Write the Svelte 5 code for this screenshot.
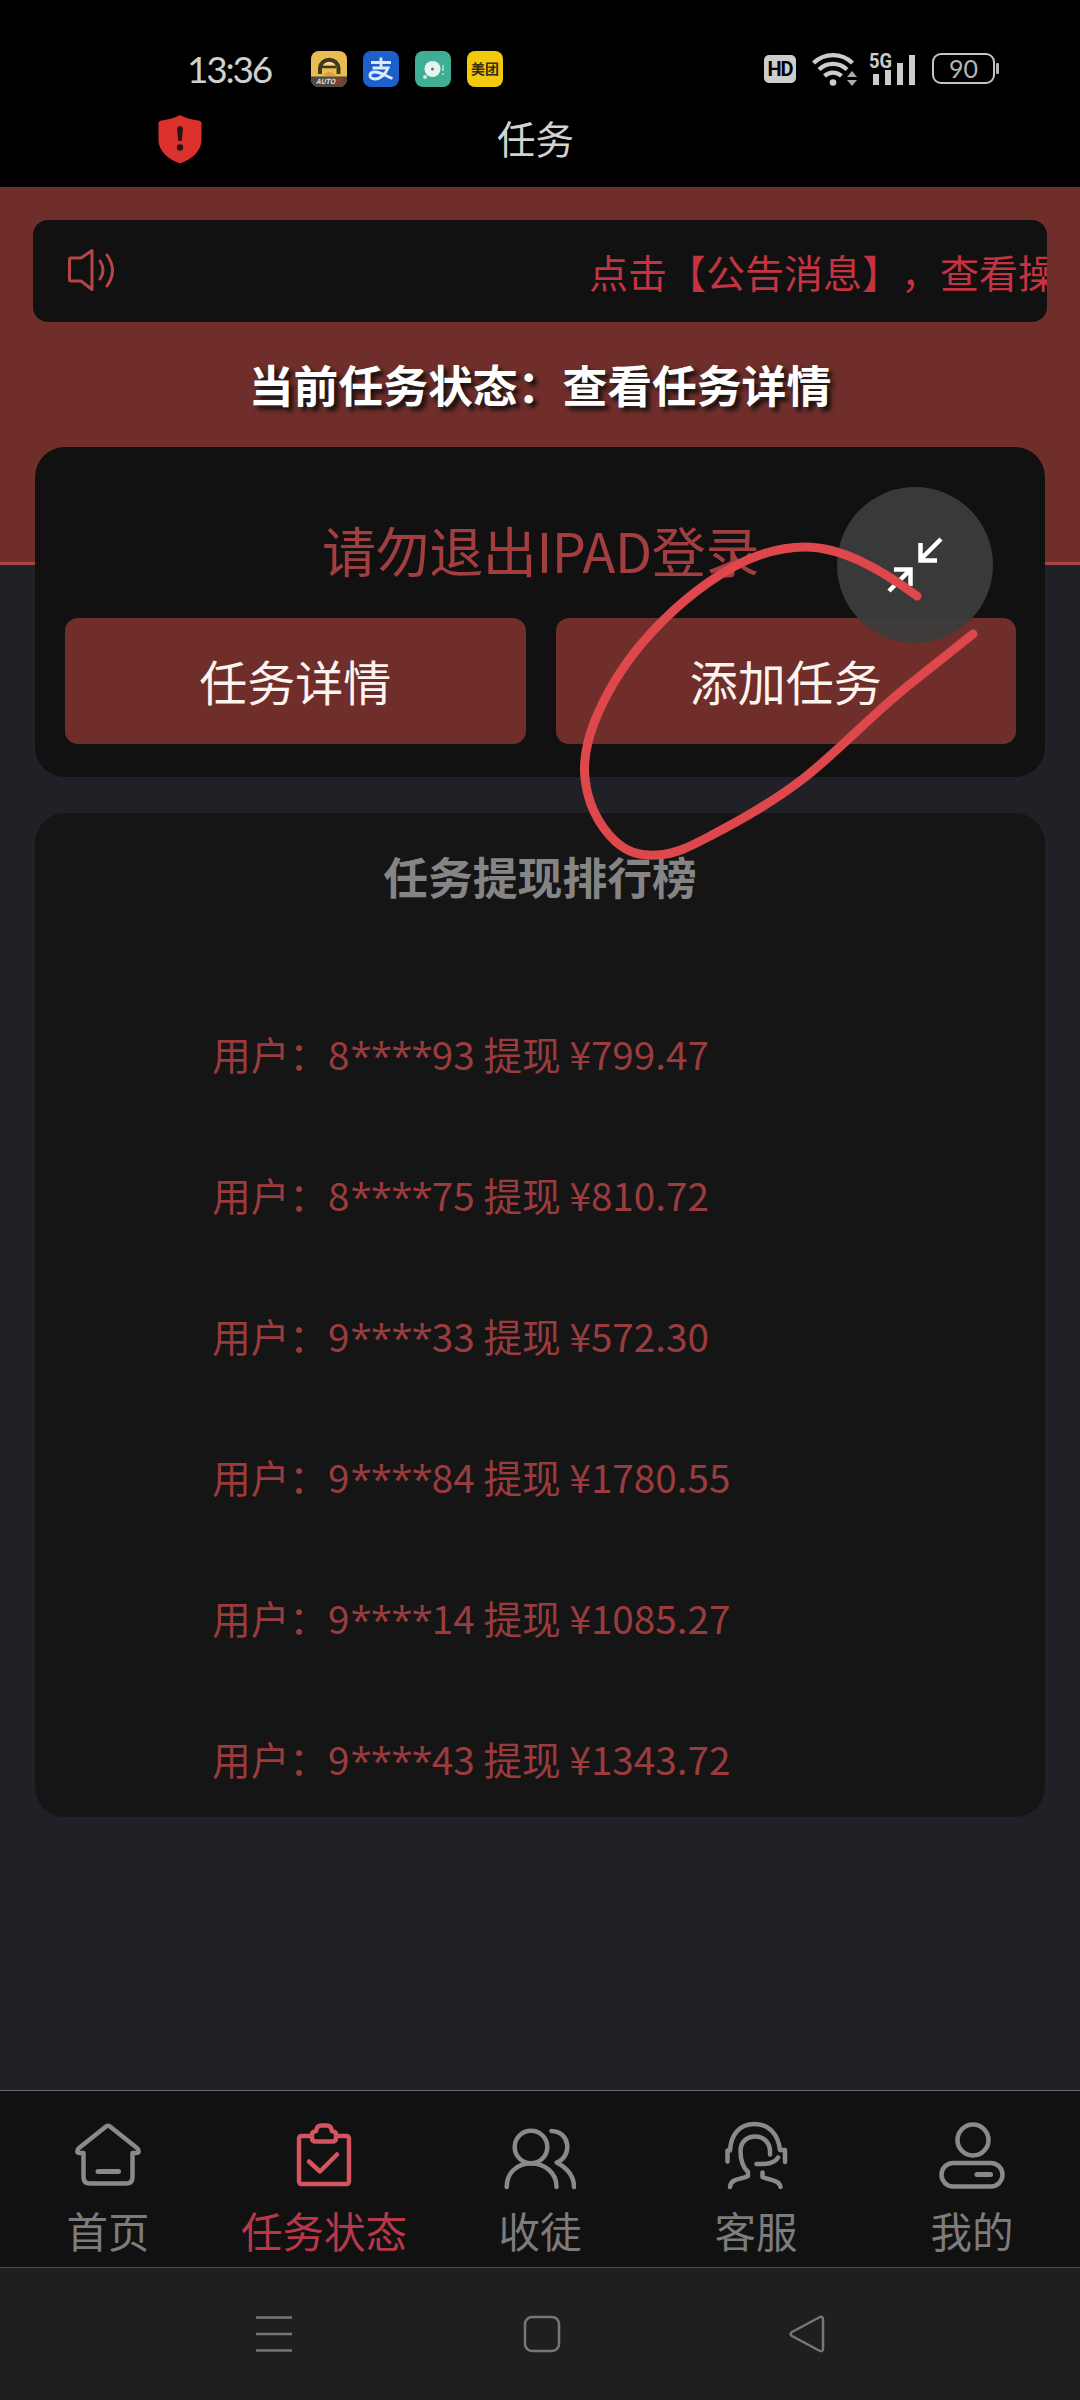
<script lang="ts">
	const ranking = [
		{ head: '8', tail: '93', amount: '¥799.47' },
		{ head: '8', tail: '75', amount: '¥810.72' },
		{ head: '9', tail: '33', amount: '¥572.30' },
		{ head: '9', tail: '84', amount: '¥1780.55' },
		{ head: '9', tail: '14', amount: '¥1085.27' },
		{ head: '9', tail: '43', amount: '¥1343.72' }
	];

	const tabs = [
		{ id: 'home', label: '首页' },
		{ id: 'task', label: '任务状态' },
		{ id: 'invite', label: '收徒' },
		{ id: 'service', label: '客服' },
		{ id: 'mine', label: '我的' }
	];

	let active = $state('task');
</script>

<div class="phone">
	<header class="top">
		<div class="status">
			<span class="status__time">13:36</span>
			<div class="status__apps">
				<svg width="36" height="36" viewBox="0 0 36 36">
					<defs><clipPath id="app-clip"><rect width="36" height="36" rx="8" /></clipPath></defs>
					<g clip-path="url(#app-clip)">
						<rect width="36" height="36" fill="#e9bd52" />
						<path d="M9 23v-6a9.300 9.300 0 0 1 18.500 0v6" fill="none" stroke="#40381c" stroke-width="4" />
						<path d="M12.500 13.500q5.800-5 11.600 0z" fill="#f3dfa0" />
						<path d="M11 16h14" stroke="#40381c" stroke-width="2.500" />
						<path d="M12 25q6-8 12.500 0z" fill="#e59a45" />
						<rect y="25.500" width="36" height="11" fill="#4a4a4c" />
						<rect x="20" y="27" width="12" height="7" fill="#7a4335" />
					</g>
					<text x="5" y="33" font-size="7" font-weight="700" font-style="italic" fill="#ddd">AUTO</text>
				</svg>
				<svg width="36" height="36" viewBox="0 0 36 36">
					<rect width="36" height="36" rx="8" fill="#1d5fcb" />
					<path
						d="M8 11.500h20M18 6.500v10M9.500 17h15.500c-2 5-7 11-13 11-7 0-6.500-7 0-7 6 0 11 4 17.500 6.500"
						fill="none"
						stroke="#dfeaf8"
						stroke-width="2.800"
					/>
				</svg>
				<svg width="36" height="36" viewBox="0 0 36 36">
					<rect width="36" height="36" rx="8" fill="#3fae94" />
					<circle cx="17.500" cy="18" r="8" fill="#e8f4ef" />
					<circle cx="17.500" cy="18" r="1.500" fill="#557a70" />
					<circle cx="10" cy="26" r="2" fill="#cfe9e0" />
					<path d="M28 14v6M28 22v2" stroke="#9edac9" stroke-width="1.800" />
				</svg>
				<span class="meituan">美团</span>
			</div>
			<div class="status__signals">
				<span class="hd">HD</span>
				<svg class="wifi" width="46" height="36" viewBox="0 0 46 36">
					<g fill="none" stroke="#ccc" stroke-width="4.200">
						<path d="M1.500 12a28 28 0 0 1 39 0" />
						<path d="M7 18.500a20 20 0 0 1 28 0" />
						<path d="M12.500 25a12.500 12.500 0 0 1 17 0" />
					</g>
					<circle cx="21" cy="31.500" r="3.300" fill="#ccc" />
					<path d="M35 26l5-6 5 6zM35 29h10l-5 6z" fill="#aaa" />
				</svg>
				<svg class="cell" width="48" height="36" viewBox="0 0 48 36">
					<text x="-1" y="17" font-size="20" font-weight="700" fill="#ccc" textLength="23" lengthAdjust="spacingAndGlyphs">5G</text>
					<path d="M3 23h6v11H3zM15 19h6v15h-6zM27 12h6v22h-6zM39 4h6v30h-6z" fill="#ccc" />
				</svg>
				<span class="battery">90</span>
			</div>
		</div>
		<div class="titlebar">
			<svg class="shield" width="44" height="50" viewBox="0 0 44 50">
				<path
					d="M22 1c5 3 13 5 18.500 5.500 2 .3 3 1.300 3 3.500v16c0 11-10 19.500-21.500 23.500C10.500 45.500.5 37 .5 26V10c0-2.200 1-3.200 3-3.500C9 6 17 4 22 1z"
					fill="#dc312c"
				/>
				<path d="M19 14q3-4 6 0l-1.300 13h-3.400z" fill="#2c1414" />
				<circle cx="22" cy="33.500" r="3.200" fill="#2c1414" />
			</svg>
			<h1>任务</h1>
		</div>
	</header>

	<main class="page">
		<section class="hero">
			<div class="notice">
				<svg width="50" height="44" viewBox="0 0 50 44">
					<g fill="none" stroke="#b64548" stroke-width="3" stroke-linejoin="round" stroke-linecap="round">
						<path d="M4 10h10L25 2.500v39L14 33H4q-1.500 0-1.500-1.500v-20Q2.500 10 4 10z" />
						<path d="M33 13q6 9 0 18" />
						<path d="M40 7q11 15.500 0 31" />
					</g>
				</svg>
				<div class="notice__track">点击【公告消息】，查看操</div>
			</div>
			<h2 class="state">当前任务状态：查看任务详情</h2>
		</section>

		<section class="card card--actions">
			<p class="warning">请勿退出IPAD登录</p>
			<div class="actions">
				<button type="button">任务详情</button>
				<button type="button">添加任务</button>
			</div>
		</section>

		<section class="card card--rank">
			<h3>任务提现排行榜</h3>
			<ul>
				{#each ranking as row}
					<li>用户：{row.head}<span class="stars">****</span>{row.tail} 提现 {row.amount}</li>
				{/each}
			</ul>
		</section>

		<div class="float">
			<svg width="56" height="56" viewBox="0 0 56 56" fill="none" stroke="#fff" stroke-width="4.500">
				<path d="M54 2L33 23M33.500 6v17.500H50" />
				<path d="M2 54l21-21M7 32.500h16.500V49" />
			</svg>
		</div>
		<!-- hand-drawn loop around the add button -->
		<svg class="mark" width="410" height="330" viewBox="0 0 410 330">
			<path
				d="M338 58C300 30 262 9 226 9C200 9 178 16 154 29C122 47 90 74 64 104C42 130 26 157 15 185C7 206 4 222 6 240C8 262 18 286 36 303C48 314 60 318 78 317C98 316 114 307 133 297C166 280 198 261 225 240C248 222 268 202 290 182C306 167 322 153 340 139L394 96"
				fill="none"
				stroke="#de474b"
				stroke-width="9"
				stroke-linecap="round"
				stroke-linejoin="round"
			/>
		</svg>
	</main>

	<nav class="tabs">
		{#each tabs as tab}
			<button type="button" class:active={active === tab.id} onclick={() => (active = tab.id)}>
				<svg width="72" height="72" viewBox="0 0 72 72">
					{#if tab.id === 'home'}
						<path d="M7 29L34 7.500q2-1.500 4 0L65 29q4 4.500-1 5h-3.500v24q0 6.500-6.500 6.500H18q-6.500 0-6.500-6.500V34H8q-5-.5-1-5z" />
						<path d="M26 52.500h20.500" stroke-width="5" />
					{:else if tab.id === 'task'}
						<path d="M23 17H14q-3 0-3 3v42q0 3 3 3h44q3 0 3-3V20q0-3-3-3H49" />
						<path d="M24 15q0-2 4-3 1-5.500 5-5.500h6q4 0 5 5.500 4 1 4 3v4q0 3.500-4 3.500H28q-4 0-4-3.500z" />
						<path d="M21 42.500l11 10 17-17" />
					{:else if tab.id === 'invite'}
						<circle cx="27" cy="28" r="16.300" />
						<path d="M2.700 68c0-14 10-23.500 24.300-23.500s25.500 9.500 25.500 23.500" />
						<path d="M47.500 12C66 12.500 69 37 52.700 43.500 63 49 70 56 70 68" />
					{:else if tab.id === 'service'}
						<path d="M7.500 42.500V31.500H10C11 15 20 5 34.500 5S58 15 60 31h5v12" />
						<path d="M50 35.500v-3C50 12.500 20.500 12.500 20.500 32c0 9 2 16 7.500 21v4c-8 4-17 2-18 11" />
						<path d="M36.500 45c9 0 18 0 21.500-6.500M42.500 53.500v4.500c7 3 17 3 18 10" />
					{:else}
						<circle cx="37" cy="21" r="15.500" />
						<rect x="5.500" y="44" width="61" height="23.500" rx="11.700" />
						<path d="M41 55.500h13.500" stroke-width="5" />
					{/if}
				</svg>
				<span>{tab.label}</span>
			</button>
		{/each}
	</nav>

	<footer class="sysnav">
		<svg width="40" height="40" viewBox="0 0 40 40"><path d="M2 3.500h36M2 20h36M2 36.500h36" /></svg>
		<svg width="40" height="40" viewBox="0 0 40 40"><rect x="4" y="3" width="34" height="34" rx="7" /></svg>
		<svg width="40" height="40" viewBox="0 0 40 40">
			<path d="M4 18L31 3.500q4-2 4 2v29q0 4-4 2L4 22q-3-2 0-4z" />
		</svg>
	</footer>
</div>

<style>
	:global(body) {
		margin: 0;
		background: #202126;
	}

	.phone {
		display: flex;
		flex-direction: column;
		width: 1080px;
		height: 2400px;
		overflow: hidden;
		background: #202126;
		font-family: 'Noto Sans CJK SC', sans-serif;
		font-weight: 400;
		text-spacing-trim: space-all;
	}

	h1,
	h2,
	h3,
	p,
	ul {
		margin: 0;
		padding: 0;
		font-weight: inherit;
	}

	button {
		padding: 0;
		border: 0;
		font: inherit;
	}

	.top {
		flex: none;
		height: 187px;
		background: #000;
	}

	.status {
		display: flex;
		align-items: center;
		height: 103px;
		padding: 34px 85px 0 187px;
		box-sizing: border-box;
	}

	.status__time {
		width: 124px;
		color: #d0d0d0;
		font-family: Lato, sans-serif;
		font-size: 37px;
		line-height: 40px;
		letter-spacing: -2.200px;
	}

	.status__apps {
		display: flex;
		gap: 16px;
	}

	.meituan {
		width: 36px;
		height: 36px;
		border-radius: 8px;
		background: #f2c90c;
		color: #3b2c12;
		font-size: 14px;
		font-weight: 700;
		line-height: 35px;
		text-align: center;
	}

	.status__signals {
		display: flex;
		align-items: center;
		margin-left: auto;
	}

	.hd {
		width: 32px;
		height: 28px;
		margin-right: 16px;
		border-radius: 5px;
		background: #ccc;
		color: #000;
		font-family: Roboto, sans-serif;
		font-size: 20px;
		font-weight: 700;
		line-height: 28px;
		text-align: center;
		letter-spacing: -1px;
	}

	.wifi {
		margin-right: 12px;
	}

	.cell {
		margin-right: 14px;
		overflow: visible;
		font-family: Roboto, sans-serif;
	}

	.battery {
		position: relative;
		width: 59px;
		height: 27px;
		border: 2px solid #c4c4c4;
		border-radius: 9px;
		color: #b5b5b5;
		font-family: Lato, sans-serif;
		font-size: 25px;
		line-height: 27px;
		text-align: center;
	}

	.battery::after {
		content: '';
		position: absolute;
		top: 8px;
		right: -6px;
		width: 3px;
		height: 11px;
		border-radius: 1px;
		background: #b5b5b5;
	}

	.titlebar {
		display: grid;
		grid-template-columns: 158px 1fr 158px;
		align-items: center;
		height: 72px;
	}

	.shield {
		grid-column: 1;
		margin-left: 158px;
	}

	h1 {
		grid-column: 2;
		margin-top: -4px;
		padding-right: 9px;
		color: #d2d2d2;
		font-size: 38.500px;
		line-height: 56px;
		text-align: center;
	}

	.page {
		position: relative;
		flex: 1;
	}

	.hero {
		height: 378px;
		padding: 33px 33px 0;
		box-sizing: border-box;
		border-bottom: 3px solid #a84642;
		background: #702e2a;
	}

	.notice {
		display: flex;
		align-items: center;
		height: 102px;
		padding-left: 34px;
		border-radius: 15px;
		background: #111;
		overflow: hidden;
		box-sizing: border-box;
	}

	.notice svg {
		flex: none;
		margin-top: -3px;
	}

	.notice__track {
		flex: none;
		margin-top: -1px;
		margin-left: 472px;
		color: #c43340;
		font-size: 39px;
		white-space: nowrap;
	}

	.state {
		margin-top: 30px;
		color: #fff;
		font-size: 44.800px;
		font-weight: 700;
		line-height: 64px;
		text-align: center;
		text-shadow: 4px 4px 4px #111;
	}

	.card {
		margin: 0 35px;
		border-radius: 30px;
		background: #111;
		box-sizing: border-box;
	}

	.card--actions {
		position: relative;
		height: 330px;
		margin-top: -118px;
		padding: 64px 29px 0 30px;
	}

	.warning {
		color: #a33e40;
		font-size: 54px;
		line-height: 78px;
		text-align: center;
		letter-spacing: -0.400px;
	}

	.actions {
		display: grid;
		grid-template-columns: 1fr 1fr;
		gap: 30px;
		margin-top: 29px;
	}

	.actions button {
		height: 126px;
		padding-bottom: 3px;
		border-radius: 13px;
		background: #702e2a;
		color: #fdf3ef;
		font-size: 48px;
	}

	.card--rank {
		height: 1004px;
		margin-top: 36px;
		padding-top: 31px;
		background: #151515;
	}

	.card--rank h3 {
		color: #858585;
		font-size: 44.800px;
		font-weight: 700;
		line-height: 64px;
		text-align: center;
	}

	.card--rank ul {
		margin-top: 75px;
		padding-left: 177px;
		list-style: none;
	}

	.card--rank li {
		height: 141px;
		color: #9a3c3e;
		font-size: 38.700px;
		line-height: 141px;
		white-space: nowrap;
	}

	.stars {
		margin-left: 1px;
		font-family: 'Open Sans', sans-serif;
		font-weight: 400;
		line-height: 1;
		letter-spacing: -1px;
	}

	.float {
		position: absolute;
		top: 300px;
		left: 837px;
		display: flex;
		align-items: center;
		justify-content: center;
		width: 156px;
		height: 156px;
		border-radius: 50%;
		background: rgba(60, 60, 60, 0.93);
	}

	.mark {
		position: absolute;
		top: 351px;
		left: 579px;
	}

	.tabs {
		display: grid;
		flex: none;
		grid-template-columns: repeat(5, 1fr);
		height: 178px;
		border-top: 1px solid #66666b;
		border-bottom: 1px solid #4c4c4c;
		background: #111;
		box-sizing: border-box;
	}

	.tabs button {
		display: flex;
		flex-direction: column;
		align-items: center;
		padding-top: 28px;
		background: none;
		color: #7c7c7c;
		font-size: 41.500px;
		line-height: 60px;
	}

	.tabs svg {
		flex: none;
		margin-bottom: 9px;
		fill: none;
		stroke: #8a8a8a;
		stroke-width: 4.500;
		stroke-linecap: round;
		stroke-linejoin: round;
	}

	.tabs .active {
		color: #b8384a;
	}

	.tabs .active svg {
		stroke: #d25560;
	}

	.sysnav {
		display: flex;
		flex: none;
		align-items: center;
		justify-content: space-between;
		height: 132px;
		padding: 0 252px 0 254px;
		background: #1f1f1f;
		box-sizing: border-box;
	}

	.sysnav svg {
		fill: none;
		stroke: #777;
		stroke-width: 2.500;
	}
</style>
